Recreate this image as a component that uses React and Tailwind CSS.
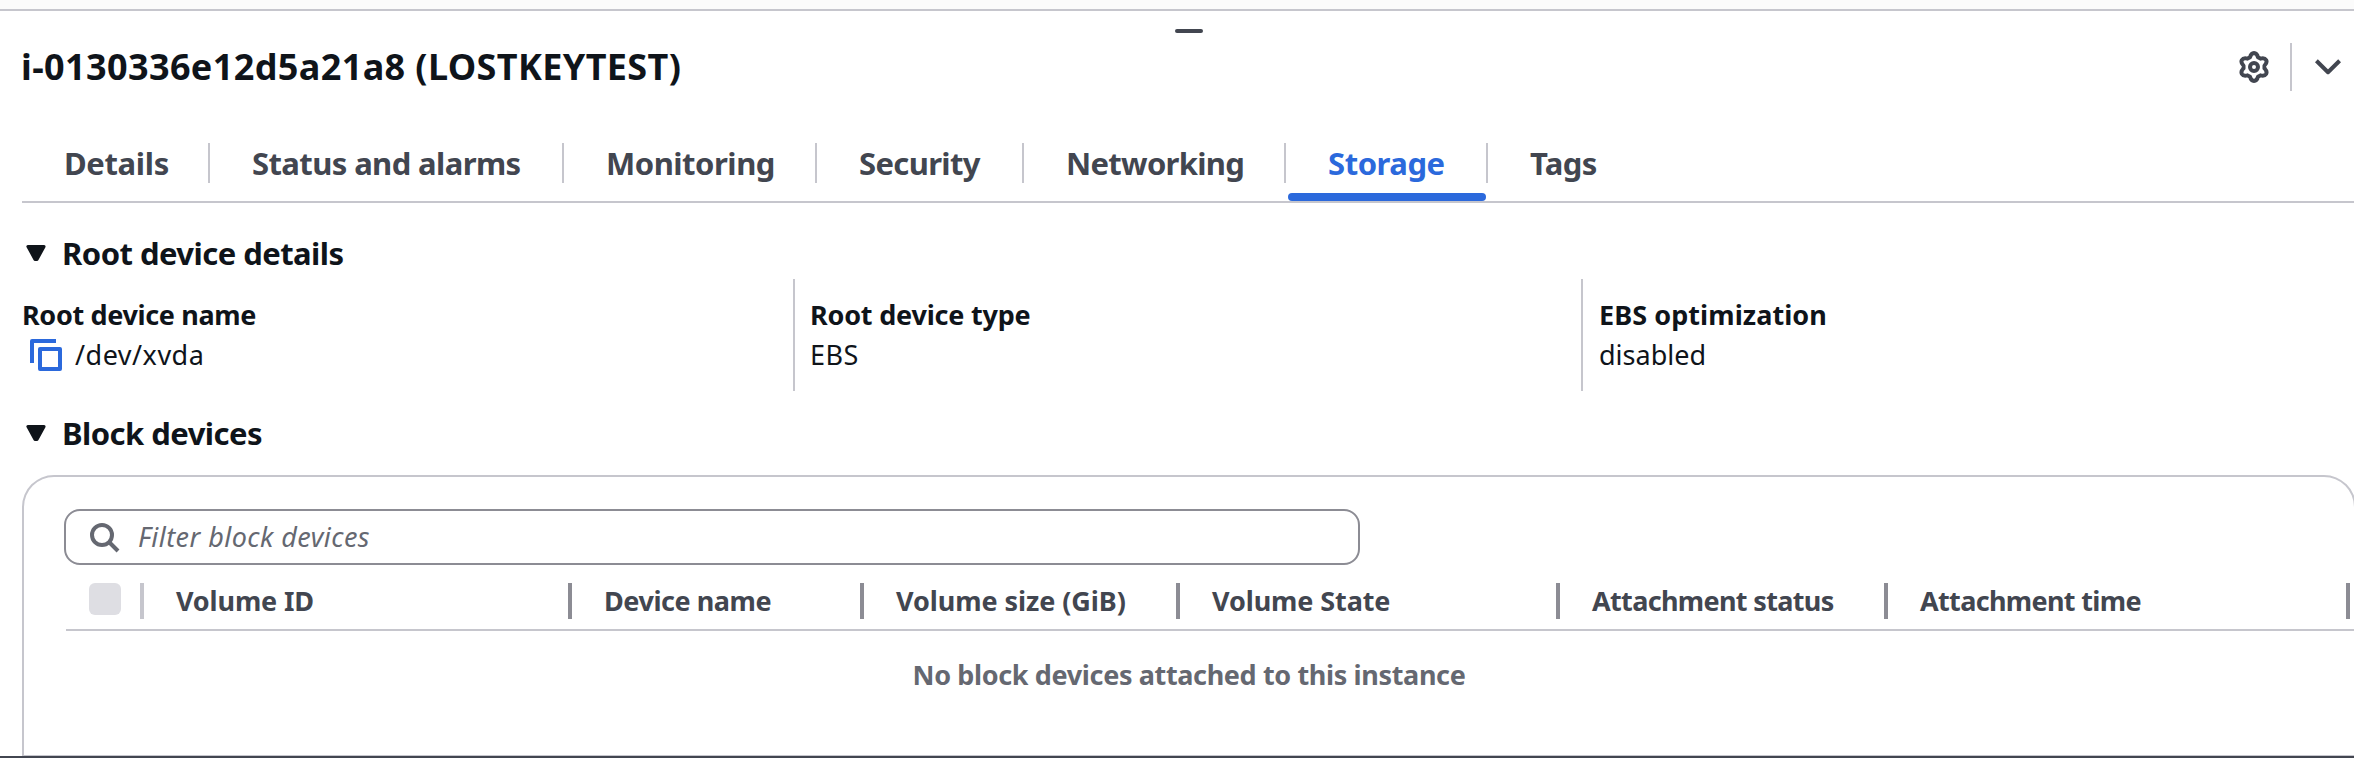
const TABS = [
  { label: 'Details', cls: 'w-[188px] tracking-[-0.35px]' },
  { label: 'Status and alarms', cls: 'w-[354px] tracking-[-0.6px]' },
  { label: 'Monitoring', cls: 'w-[253px] tracking-[-0.48px]' },
  { label: 'Security', cls: 'w-[207px] tracking-[-0.65px]' },
  { label: 'Networking', cls: 'w-[262px] tracking-[-0.7px]' },
  { label: 'Storage', cls: 'w-[202px] tracking-[-0.45px]', active: true },
  { label: 'Tags', cls: 'w-[160px] tracking-[-0.6px]' },
];

const COLUMNS = [
  { label: 'Volume ID', cls: 'w-[428px] tracking-[-0.15px]' },
  { label: 'Device name', cls: 'w-[292px] tracking-[-0.45px]' },
  { label: 'Volume size (GiB)', cls: 'w-[316px] tracking-[-0.07px]' },
  { label: 'Volume State', cls: 'w-[380px] tracking-[-0.1px]' },
  { label: 'Attachment status', cls: 'w-[328px] tracking-[-0.66px]' },
  { label: 'Attachment time', cls: 'w-[462px] tracking-[-0.66px]' },
];

// Six-toothed gear outline in a 16-unit box.
const TOOTH = [[-2, -4.9], [-1.45, -6.95], [1.45, -6.95], [2, -4.9]];
const GEAR = [0, 60, 120, 180, 240, 300]
  .map((deg, i) => {
    const a = (deg * Math.PI) / 180;
    const p = TOOTH.map(([x, y]) => [
      (8 + x * Math.cos(a) - y * Math.sin(a)).toFixed(2),
      (8 + x * Math.sin(a) + y * Math.cos(a)).toFixed(2),
    ].join(' '));
    return `${i ? 'L' : 'M'}${p[0]} Q${p[1]} ${(8 + 7 * Math.sin(a)).toFixed(2)} ${(8 - 7 * Math.cos(a)).toFixed(2)} Q${p[2]} ${p[3]}`;
  })
  .join(' ') + 'Z';

function GearIcon() {
  return (
    <svg className="size-8" viewBox="0 0 16 16" fill="none" stroke="#424650" strokeWidth="2" strokeLinejoin="round">
      <path d={GEAR} />
      <circle cx="8" cy="8" r="2" />
    </svg>
  );
}

function ChevronIcon() {
  return (
    <svg className="size-8" viewBox="0 0 16 16" fill="none" stroke="#424650" strokeWidth="2" strokeLinejoin="round">
      <path d="M2.2 4.9 8 10.6 13.8 4.9" />
    </svg>
  );
}

function CopyIcon() {
  return (
    <svg className="size-8" viewBox="0 0 32 32" fill="none" stroke="#2b69dc" strokeWidth="4" strokeLinejoin="round">
      <path d="M2 24V2h24" />
      <path d="M10 10h20v20H10z" />
    </svg>
  );
}

function SearchIcon() {
  return (
    <svg className="size-8" viewBox="0 0 32 32" fill="none" stroke="#656871" strokeWidth="4">
      <circle cx="14" cy="14" r="10" />
      <path d="m21 21 9 9" />
    </svg>
  );
}

function SectionHeader({ children, className }) {
  return (
    <h3 className={'flex h-11 items-center gap-4 pl-1 text-[31px] tracking-[-0.54px] ' + className}>
      <svg className="h-4 w-5" viewBox="0 0 20 16" fill="#0f141a" stroke="#0f141a" strokeWidth="3" strokeLinejoin="round">
        <path d="M1.9 1.5h16.2L11 14.5H9z" />
      </svg>
      {children}
    </h3>
  );
}

export default function App() {
  return (
    <div className="h-[758px] w-[2354px] overflow-hidden border-b-2 border-[#424650] bg-white font-['Noto_Sans',sans-serif] font-bold whitespace-nowrap text-[#0f141a]">
      <div className="h-[11px] border-b-2 border-[#c6c6cd] bg-[#fbfbfb]" />
      <header className="relative flex h-28 items-center justify-between pr-[10px] pl-[21px]">
        <div className="absolute top-[18px] left-[1175px] h-1 w-7 rounded-[2px] bg-[#424650]" />
        <h2 className="text-[36px] tracking-[0.38px]">i-0130336e12d5a21a8 (LOSTKEYTEST)</h2>
        <div className="flex items-center gap-5">
          <GearIcon />
          <div className="flex items-center gap-5 border-l-2 border-[#c6c6cd] py-2 pl-5">
            <ChevronIcon />
          </div>
        </div>
      </header>

      <nav className="mt-[2px] ml-[22px] flex h-[78px] items-center border-b-2 border-[#c6c6cd] text-[31px] leading-10 text-[#424650]">
        {TABS.map((t) => (
          <div
            key={t.label}
            className={`relative h-10 border-r-2 pl-[42px] ${t.cls} ${t.label === 'Tags' ? 'border-transparent' : 'border-[#c6c6cd]'} ${t.active ? 'text-[#2b69dc]' : ''}`}
          >
            {t.label}
            {t.active && <span className="absolute right-0 -bottom-[18px] left-[2px] h-2 rounded-[4px] bg-[#2b69dc]" />}
          </div>
        ))}
      </nav>

      <section className="pl-[22px]">
        <SectionHeader className="mt-7">Root device details</SectionHeader>
        <div className="mt-1 flex h-28 text-[27px] leading-10">
          <div className="w-[771px] pt-4">
            <div className="tracking-[-0.34px]">Root device name</div>
            <div className="flex items-center gap-[13px] pl-2 font-normal tracking-[0.5px]">
              <CopyIcon />
              /dev/xvda
            </div>
          </div>
          <div className="w-[788px] border-l-2 border-[#c6c6cd] pt-4 pl-[15px]">
            <div className="tracking-[-0.2px]">Root device type</div>
            <div className="font-normal tracking-[0.5px]">EBS</div>
          </div>
          <div className="border-l-2 border-[#c6c6cd] pt-4 pl-4">
            <div className="tracking-[0.07px]">EBS optimization</div>
            <div className="font-normal">disabled</div>
          </div>
        </div>
      </section>

      <section className="pl-[22px]">
        <SectionHeader className="mt-5">Block devices</SectionHeader>
        <div className="mt-5 h-[281px] w-[2334px] rounded-t-[32px] border-2 border-b border-[#c6c6cd] pt-8 text-[27px]">
          <div className="ml-10 flex h-14 w-[1296px] items-center gap-[18px] rounded-2xl border-2 border-[#8c8c94] pl-[22px] font-normal tracking-[0.45px] text-[#656871] italic">
            <SearchIcon />
            Filter block devices
          </div>
          <div className="ml-[42px] flex h-[66px] border-b-2 border-[#c6c6cd] pt-[18px] leading-9 text-[#424650]">
            <div className="h-9 w-[78px] shrink-0 border-r-4 border-[#c6c6cd] pl-[23px]">
              <div className="size-8 rounded-md bg-[#dedee3]" />
            </div>
            {COLUMNS.map((c) => (
              <div key={c.label} className={`h-9 shrink-0 border-r-4 border-[#8c8c94] pl-8 ${c.cls}`}>
                {c.label}
              </div>
            ))}
          </div>
          <div className="text-center leading-[88px] tracking-[-0.36px] text-[#656871]">No block devices attached to this instance</div>
        </div>
      </section>
    </div>
  );
}
